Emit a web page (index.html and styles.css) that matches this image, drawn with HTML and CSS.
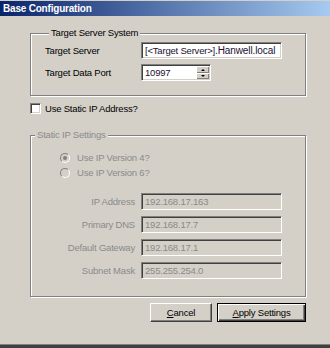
FILE: index.html
```html
<!DOCTYPE html>
<html lang="en">
<head>
    <meta charset="UTF-8">
    <title>Base Configuration</title>
    <link rel="stylesheet" href="styles.css">
</head>
<body>
    <div class="window">
        <div class="titlebar"><span>Base Configuration</span></div>

        <div class="client">
            <fieldset class="group server-group">
                <legend>Target Server System</legend>
                <div class="row">
                    <label class="lbl">Target Server</label>
                    <div class="field wide"><span>[&lt;Target Server&gt;]</span><span class="host">.Hanwell.local</span></div>
                </div>
                <div class="row">
                    <label class="lbl">Target Data Port</label>
                    <div class="field spin">
                        <span>10997</span>
                        <div class="spin-btns">
                            <span class="spin-btn up"></span>
                            <span class="spin-btn down"></span>
                        </div>
                    </div>
                </div>
            </fieldset>

            <div class="check-row">
                <span class="checkbox"></span>
                <span>Use Static IP Address?</span>
            </div>

            <fieldset class="group static-group disabled">
                <legend>Static IP Settings</legend>
                <div class="radio-row"><span class="radio checked"></span><span>Use IP Version 4?</span></div>
                <div class="radio-row"><span class="radio"></span><span>Use IP Version 6?</span></div>

                <div class="ip-rows">
                    <div class="row">
                        <label class="lbl right">IP Address</label>
                        <div class="field wide">192.168.17.163</div>
                    </div>
                    <div class="row">
                        <label class="lbl right">Primary DNS</label>
                        <div class="field wide">192.168.17.7</div>
                    </div>
                    <div class="row">
                        <label class="lbl right">Default Gateway</label>
                        <div class="field wide">192.168.17.1</div>
                    </div>
                    <div class="row">
                        <label class="lbl right">Subnet Mask</label>
                        <div class="field wide">255.255.254.0</div>
                    </div>
                </div>
            </fieldset>

            <div class="buttons">
                <button class="btn cancel"><u>C</u>ancel</button>
                <button class="btn apply"><u>A</u>pply Settings</button>
            </div>
        </div>

        <div class="frame-bottom"></div>
    </div>
</body>
</html>
```

FILE: styles.css
```css
body {
    margin: 0;
    background-color: #d4d0c8;
    font-family: "Liberation Sans", Arial, sans-serif;
    font-size: 9.5px;
    letter-spacing: -0.2px;
    color: #000;
}
.window {
    width: 330px;
    height: 348px;
    display: flex;
    flex-direction: column;
    padding-top: 1px;
    box-sizing: border-box;
}
.titlebar {
    height: 15px;
    display: flex;
    align-items: center;
    padding-left: 3px;
    background: linear-gradient(to right, #0a246a, #a6caf0);
    color: #fff;
    font-weight: bold;
    font-size: 10px;
}
.client {
    flex: 1;
    display: flex;
    flex-direction: column;
    padding: 11px 24px 0 30px;
}

/* etched group boxes */
.group {
    margin: 0;
    padding: 3px 0 14px 14px;
    border: 1px solid #808080;
    box-shadow: inset 1px 1px 0 #fff, 1px 1px 0 #fff;
    min-width: 0;
}
.group legend {
    margin-left: 4px;
    padding: 0 2px;
    height: 12px;
    line-height: 12px;
    background-color: #d4d0c8;
}
.server-group {
    display: flex;
    flex-direction: column;
    gap: 5px;
}
.row {
    display: flex;
    align-items: center;
    height: 17px;
}
.lbl {
    width: 96px;
}
.lbl.right {
    width: 104px;
    margin-right: 6px;
    text-align: right;
}

/* sunken text fields */
.field {
    height: 17px;
    box-sizing: border-box;
    display: flex;
    align-items: center;
    padding-left: 3px;
    border: 1px solid;
    border-color: #808080 #fff #fff #808080;
    box-shadow: inset 1px 1px 0 #404040, inset -1px -1px 0 #d4d0c8;
    background-color: #fff;
    color: #1a1030;
    white-space: nowrap;
    overflow: hidden;
}
.field.wide {
    width: 141px;
}
.host {
    font-size: 10px;
    letter-spacing: -0.1px;
}
.field.spin {
    width: 70px;
    justify-content: space-between;
    padding-right: 1px;
}
.spin-btns {
    display: flex;
    flex-direction: column;
    width: 13px;
    height: 13px;
}
.spin-btn {
    flex: 1;
    display: flex;
    align-items: center;
    justify-content: center;
    background-color: #d4d0c8;
    border-top: 1px solid #fff;
    border-left: 1px solid #fff;
    box-shadow: inset -1px -1px 0 #808080;
}
.spin-btn::after {
    content: "";
    width: 0;
    height: 0;
    border-left: 2px solid transparent;
    border-right: 2px solid transparent;
}
.spin-btn.up::after {
    border-bottom: 2px solid #000;
}
.spin-btn.down::after {
    border-top: 2px solid #000;
}

/* checkbox */
.check-row {
    display: flex;
    align-items: center;
    gap: 4px;
    height: 12px;
    margin: 6px 0 15px;
}
.checkbox {
    width: 11px;
    height: 11px;
    box-sizing: border-box;
    border: 1px solid;
    border-color: #808080 #fff #fff #808080;
    box-shadow: inset 1px 1px 0 #404040, inset -1px -1px 0 #d4d0c8;
    background-color: #fff;
}

/* disabled static IP group */
.static-group {
    padding-top: 10px;
    padding-bottom: 17px;
    padding-left: 0;
}
.disabled {
    color: #8a8a8a;
}
.disabled .field {
    background-color: #d4d0c8;
    color: #8a8a8a;
}
.radio-row {
    display: flex;
    align-items: center;
    gap: 7px;
    height: 13px;
    margin-bottom: 2px;
    padding-left: 29px;
}
.radio {
    width: 10px;
    height: 10px;
    box-sizing: border-box;
    border-radius: 50%;
    border: 1px solid;
    border-color: #808080 #fff #fff #808080;
    background-color: #d4d0c8;
    display: flex;
    align-items: center;
    justify-content: center;
}
.radio.checked::after {
    content: "";
    width: 4px;
    height: 4px;
    border-radius: 50%;
    background-color: #808080;
}
.ip-rows {
    display: flex;
    flex-direction: column;
    gap: 6px;
    margin-top: 14px;
}

/* buttons */
.buttons {
    display: flex;
    justify-content: flex-end;
    gap: 5px;
    margin-top: 6px;
}
.btn {
    height: 19px;
    padding: 0;
    font-family: inherit;
    font-size: 9.5px;
    letter-spacing: -0.2px;
    color: #000;
    background-color: #d4d0c8;
    border: 1px solid;
    border-color: #fff #404040 #404040 #fff;
    box-shadow: inset -1px -1px 0 #808080;
}
.btn.cancel {
    width: 62px;
}
.btn.apply {
    width: 89px;
    border: 1px solid #000;
    box-shadow: inset 1px 1px 0 #fff, inset -1px -1px 0 #404040, inset -2px -2px 0 #808080;
}
.frame-bottom {
    height: 4px;
    border-top: 1px solid #808080;
    background-color: #404040;
    box-sizing: border-box;
}
```
